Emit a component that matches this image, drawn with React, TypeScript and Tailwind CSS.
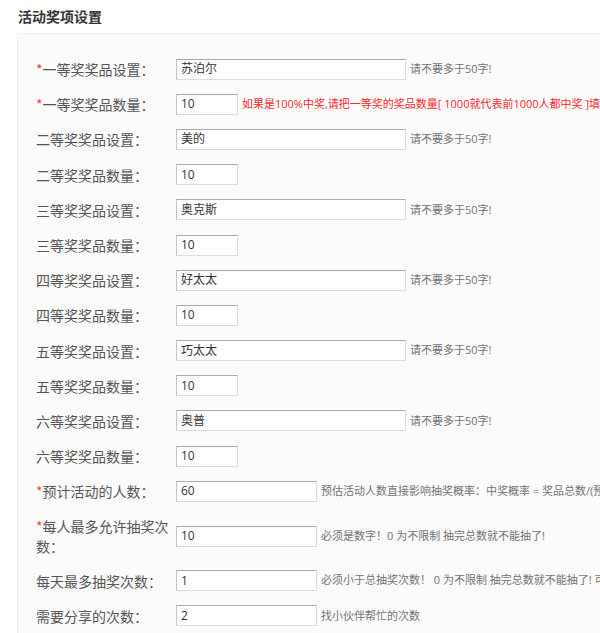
import React from "react";

type Row = {
  label: string;
  required?: boolean;
  value: string;
  size: "wide" | "short" | "mid";
  help?: string;
  red?: boolean;
};

const rows: Row[] = [
  { label: "一等奖奖品设置：", required: true, value: "苏泊尔", size: "wide", help: "请不要多于50字!" },
  {
    label: "一等奖奖品数量：",
    required: true,
    value: "10",
    size: "short",
    help: "如果是100%中奖,请把一等奖的奖品数量[ 1000就代表前1000人都中奖 ]填写到最大",
    red: true,
  },
  { label: "二等奖奖品设置：", value: "美的", size: "wide", help: "请不要多于50字!" },
  { label: "二等奖奖品数量：", value: "10", size: "short" },
  { label: "三等奖奖品设置：", value: "奥克斯", size: "wide", help: "请不要多于50字!" },
  { label: "三等奖奖品数量：", value: "10", size: "short" },
  { label: "四等奖奖品设置：", value: "好太太", size: "wide", help: "请不要多于50字!" },
  { label: "四等奖奖品数量：", value: "10", size: "short" },
  { label: "五等奖奖品设置：", value: "巧太太", size: "wide", help: "请不要多于50字!" },
  { label: "五等奖奖品数量：", value: "10", size: "short" },
  { label: "六等奖奖品设置：", value: "奥普", size: "wide", help: "请不要多于50字!" },
  { label: "六等奖奖品数量：", value: "10", size: "short" },
  {
    label: "预计活动的人数：",
    required: true,
    value: "60",
    size: "mid",
    help: "预估活动人数直接影响抽奖概率：中奖概率 = 奖品总数/(预估活动人数×每人抽奖次数)",
  },
  {
    label: "每人最多允许抽奖次数：",
    required: true,
    value: "10",
    size: "mid",
    help: "必须是数字！0 为不限制 抽完总数就不能抽了!",
  },
  {
    label: "每天最多抽奖次数：",
    value: "1",
    size: "mid",
    help: "必须小于总抽奖次数！ 0 为不限制 抽完总数就不能抽了! 可以设置每天的次数",
  },
  { label: "需要分享的次数：", value: "2", size: "mid", help: "找小伙伴帮忙的次数" },
];

const widthClass: Record<Row["size"], string> = {
  wide: "w-[230px]",
  short: "w-[62px]",
  mid: "w-[141px]",
};

const latinCjk = { fontFamily: '"Open Sans", "Noto Sans CJK SC", sans-serif' };
const cjk = { fontFamily: '"Noto Sans CJK SC", "Noto Sans", sans-serif' };

export default function App() {
  return (
    <div className="w-[600px] h-[633px] overflow-hidden bg-white" style={cjk}>
      <div className="h-[33px] flex items-center pl-[18px] text-[14px] font-bold text-[#333]">
        活动奖项设置
      </div>
      <div className="ml-[17px] w-[700px] border border-[#efefef] bg-[#fbfbfb] pt-[17.5px] pl-[18px] pb-[20px]">
        {rows.map((r, i) => (
          <div key={i} className="flex items-center py-[7.1px]">
            <div className="w-[140px] pr-[4px] shrink-0 text-[14px] leading-[20px] text-[#555]">
              {r.required && <span className="text-[#ff3b3b]">*</span>}
              {r.label}
            </div>
            <div
              className={`${widthClass[r.size]} h-[21px] shrink-0 bg-white border border-[#dcdcdc] border-t-[#a9a9a9] border-l-[#c4c4c4] pl-[4px] flex items-center text-[12px] text-[#333]`}
              style={latinCjk}
            >
              {r.value}
            </div>
            {r.help && (
              <div
                className={`ml-[4px] whitespace-nowrap text-[11px] ${r.red ? "text-[#ff2a2a]" : "text-[#727272]"}`}
                style={latinCjk}
              >
                {r.help}
              </div>
            )}
          </div>
        ))}
      </div>
    </div>
  );
}
